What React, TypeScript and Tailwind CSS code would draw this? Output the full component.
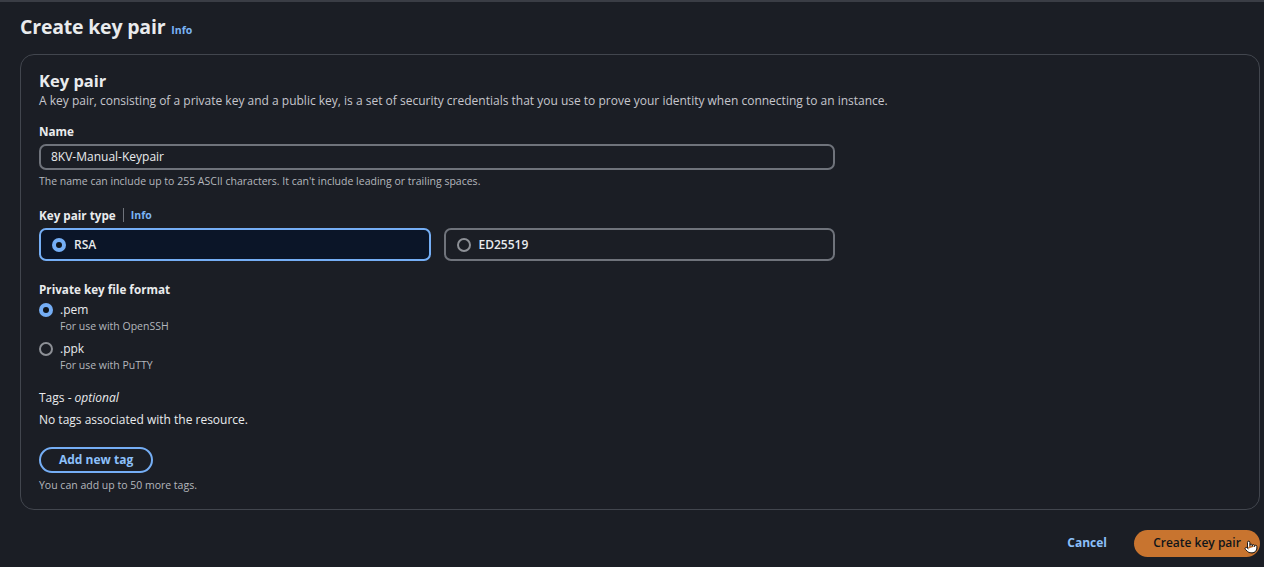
import { Pointer } from "lucide-react";

function Radio({ checked }: { checked: boolean }) {
  return checked ? (
    <span className="w-[14px] h-[14px] rounded-full bg-[#75aef5] flex items-center justify-center shrink-0">
      <span className="w-[6px] h-[6px] rounded-full bg-[#0f141a]" />
    </span>
  ) : (
    <span className="block w-[14px] h-[14px] rounded-full border-2 border-[#8d9096] shrink-0" />
  );
}

export default function App() {
  return (
    <div className="min-h-[567px] bg-[#1b1e25] text-[#e9ebed] font-['Open_Sans',sans-serif] border-t-2 border-[#3a3d45]">
      <div className="px-5 pt-[11px]">
        <div className="flex items-baseline gap-[6px] leading-[28px]">
          <h1 className="text-[19.5px] font-bold tracking-[-0.2px]">Create key pair</h1>
          <span className="text-[10.5px] font-bold text-[#7ab4f5]">Info</span>
        </div>

        <div className="mt-[10px] mr-[-16px] border border-[#42464e] rounded-[14px] pl-[18px] pr-4 pt-[15px] pb-[16px]">
          <h2 className="text-[16.5px] font-bold leading-[22px]">Key pair</h2>
          <p className="text-[12px] text-[#c6c6cd] leading-[18px]">
            A key pair, consisting of a private key and a public key, is a set of security credentials that you use to prove your identity when connecting to an instance.
          </p>

          <div className="w-[796px]">
            <div className="mt-[12px] text-[11.7px] font-bold leading-[18px]">Name</div>
            <div className="mt-[4px] h-[26px] border-2 border-[#6f737b] rounded-[7px] flex items-center px-[10px] text-[12px]">
              8KV-Manual-Keypair
            </div>
            <div className="mt-[3px] text-[10.5px] text-[#b4b7bd] leading-[16px]">
              The name can include up to 255 ASCII characters. It can't include leading or trailing spaces.
            </div>

            <div className="mt-[17px] flex items-center text-[11.7px] leading-[18px]">
              <span className="font-bold">Key pair type</span>
              <span className="mx-[7px] w-px h-[14px] bg-[#6f737b]" />
              <span className="text-[10.5px] font-bold text-[#7ab4f5]">Info</span>
            </div>
            <div className="mt-[4px] grid grid-cols-2 gap-[13px]">
              <div className="h-[33px] border-2 border-[#75aef5] bg-[#0b1528] rounded-[7px] flex items-center gap-[8px] px-[11px] text-[12px] font-semibold">
                <Radio checked />
                RSA
              </div>
              <div className="h-[33px] border-2 border-[#6f737b] rounded-[7px] flex items-center gap-[8px] px-[11px] text-[12px] font-semibold">
                <Radio checked={false} />
                ED25519
              </div>
            </div>
          </div>

          <div className="mt-[19px] text-[11.7px] font-bold leading-[18px]">Private key file format</div>
          <div className="mt-[3px] flex gap-[7px]">
            <div className="pt-[2px]"><Radio checked /></div>
            <div>
              <div className="text-[12px] leading-[18px]">.pem</div>
              <div className="text-[10.5px] text-[#b4b7bd] leading-[14px]">For use with OpenSSH</div>
            </div>
          </div>
          <div className="mt-[7px] flex gap-[7px]">
            <div className="pt-[2px]"><Radio checked={false} /></div>
            <div>
              <div className="text-[12px] leading-[18px]">.ppk</div>
              <div className="text-[10.5px] text-[#b4b7bd] leading-[14px]">For use with PuTTY</div>
            </div>
          </div>

          <div className="mt-[17px] text-[12px] leading-[18px]">
            Tags - <span className="italic">optional</span>
          </div>
          <div className="mt-[4px] text-[12px] leading-[18px]">No tags associated with the resource.</div>

          <button className="mt-[18px] h-[26px] px-[18px] border-2 border-[#75aef5] rounded-full text-[12px] font-bold text-[#8cc0fa] leading-none">
            Add new tag
          </button>
          <div className="mt-[4px] text-[10.5px] text-[#b4b7bd] leading-[16px]">You can add up to 50 more tags.</div>
        </div>

        <div className="mt-[19px] mr-[-16px] flex justify-end items-center gap-[27px]">
          <span className="text-[12px] font-bold text-[#8cc0fa]">Cancel</span>
          <div className="relative">
            <button className="h-[27px] w-[126px] rounded-full bg-[#c8742f] text-[12px] font-semibold text-[#0f141a] leading-none">
              Create key pair
            </button>
            <Pointer className="absolute right-[2px] top-[11px] w-[14px] h-[14px] text-black fill-white" strokeWidth={1.5} />
          </div>
        </div>
      </div>
    </div>
  );
}
